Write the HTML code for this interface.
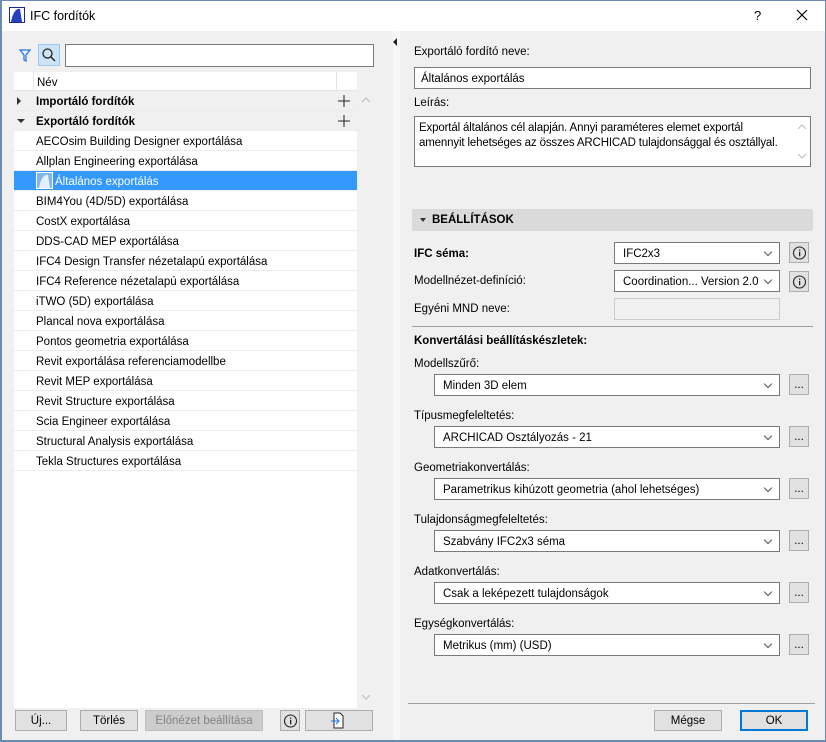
<!DOCTYPE html>
<html><head><meta charset="utf-8"><style>
*{box-sizing:border-box;margin:0;padding:0}
body{width:826px;height:742px;overflow:hidden;background:#f0f0f0;font-family:"Liberation Sans",sans-serif;font-size:11.5px;color:#000;position:relative}
.a{position:absolute}
.win{left:0;top:0;width:826px;height:742px;border:1px solid #6b8cae;border-left:2px solid #6b8cae;border-bottom:2px solid #6b8cae}
.row{position:absolute;left:14px;width:343px;height:20px;line-height:22px;padding-left:22px;border-bottom:1px solid #ececec;background:#fff;white-space:nowrap}
.grp{background:#f0f0f0;font-weight:bold}
.inp{position:absolute;background:#fff;border:1px solid #7a7a7a;height:22px;line-height:22px;padding-left:6px;white-space:nowrap}
.dd{position:absolute;background:#fff;border:1px solid #7a7a7a;height:22px;line-height:22px;padding-left:8px;white-space:nowrap}
.dd:after{content:"";position:absolute;right:8px;top:6px;width:5px;height:5px;border-right:1px solid #555;border-bottom:1px solid #555;transform:rotate(45deg)}
.btn{position:absolute;background:#e1e1e1;border:1px solid #adadad;height:21px;line-height:21px;text-align:center}
.info{position:absolute;width:20px;height:21px;background:#e1e1e1;border:1px solid #adadad}
.lbl{position:absolute;white-space:nowrap;margin-top:2px}
</style></head><body>
<svg width="0" height="0" style="position:absolute"><defs><symbol id="i" viewBox="0 0 20 21"><circle cx="9.5" cy="10" r="6" fill="none" stroke="#222" stroke-width="1.1"/><rect x="9" y="6.5" width="1.3" height="1.3" fill="#222"/><rect x="9" y="8.8" width="1.3" height="4.5" fill="#222"/></symbol></defs></svg>
<div class="a" style="left:0;top:0;width:826px;height:31px;background:#fff"></div>
<svg class="a" style="left:9px;top:7px" width="16" height="16"><rect x="0.5" y="0.5" width="15" height="15" fill="#fff" stroke="#1a2a8a"/><path d="M2 15 C4 4 8 1 11 2 L13 15Z" fill="#2a3fc0"/></svg>
<div class="lbl" style="left:30px;top:7px;font-size:12.5px">IFC fordítók</div>
<div class="lbl" style="left:754px;top:6px;font-size:13px">?</div>
<svg class="a" style="left:796px;top:9px" width="12" height="12"><path d="M1 1L11 11M11 1L1 11" stroke="#000" stroke-width="1.2"/></svg>

<svg class="a" style="left:19px;top:49px" width="12" height="13"><path d="M1 1H11L7 6V12L5 11V6Z" fill="none" stroke="#1a73e8" stroke-width="1.2"/></svg>
<div class="a" style="left:38px;top:44px;width:22px;height:22px;background:#cce4f7;border:1px solid #99c9ef"></div>
<svg class="a" style="left:41px;top:47px" width="16" height="16"><circle cx="6.5" cy="6.5" r="4.5" fill="none" stroke="#222" stroke-width="1.3"/><path d="M10 10L14 14" stroke="#222" stroke-width="1.5"/></svg>
<div class="a" style="left:65px;top:44px;width:309px;height:23px;background:#fff;border:1px solid #7a7a7a"></div>
<div class="a" style="left:14px;top:72px;width:343px;height:19px;background:#fff;border-bottom:1px solid #e5e5e5"></div>
<div class="a" style="left:33px;top:72px;width:1px;height:19px;background:#e5e5e5"></div>
<div class="a" style="left:336px;top:72px;width:1px;height:19px;background:#e5e5e5"></div>
<div class="lbl" style="left:37px;top:75px">Név</div>
<div class="a" style="left:14px;top:91px;width:343px;height:617px;background:#fff"></div>
<div class="row grp" style="top:91px">Importáló fordítók</div>
<div class="row grp" style="top:111px">Exportáló fordítók</div>
<div class="a" style="left:17px;top:97px;width:0;height:0;border-left:4px solid #333;border-top:4px solid transparent;border-bottom:4px solid transparent"></div>
<div class="a" style="left:17px;top:119px;width:0;height:0;border-top:4px solid #333;border-left:4px solid transparent;border-right:4px solid transparent"></div>
<svg class="a" style="left:338px;top:95px" width="12" height="12"><path d="M6 0V12M0 6H12" stroke="#222"/></svg>
<svg class="a" style="left:338px;top:115px" width="12" height="12"><path d="M6 0V12M0 6H12" stroke="#222"/></svg>
<div class="row" style="top:131px">AECOsim Building Designer exportálása</div>
<div class="row" style="top:151px">Allplan Engineering exportálása</div>
<div class="row" style="top:171px;background:#3399ff;color:#fff;padding-left:41px">Általános exportálás</div>
<svg class="a" style="left:36px;top:172px" width="17" height="17"><rect x="0.5" y="0.5" width="16" height="16" fill="#7fb6ee" stroke="#fff"/><path d="M3 16 C5 5 9 2 12 3 L14 16Z" fill="#fff" opacity=".8"/></svg>
<div class="row" style="top:191px">BIM4You (4D/5D) exportálása</div>
<div class="row" style="top:211px">CostX exportálása</div>
<div class="row" style="top:231px">DDS-CAD MEP exportálása</div>
<div class="row" style="top:251px">IFC4 Design Transfer nézetalapú exportálása</div>
<div class="row" style="top:271px">IFC4 Reference nézetalapú exportálása</div>
<div class="row" style="top:291px">iTWO (5D) exportálása</div>
<div class="row" style="top:311px">Plancal nova exportálása</div>
<div class="row" style="top:331px">Pontos geometria exportálása</div>
<div class="row" style="top:351px">Revit exportálása referenciamodellbe</div>
<div class="row" style="top:371px">Revit MEP exportálása</div>
<div class="row" style="top:391px">Revit Structure exportálása</div>
<div class="row" style="top:411px">Scia Engineer exportálása</div>
<div class="row" style="top:431px">Structural Analysis exportálása</div>
<div class="row" style="top:451px">Tekla Structures exportálása</div>
<svg class="a" style="left:361px;top:97px" width="10" height="6"><path d="M1 5L5 1L9 5" stroke="#bbb" fill="none"/></svg>
<svg class="a" style="left:361px;top:694px" width="10" height="6"><path d="M1 1L5 5L9 1" stroke="#bbb" fill="none"/></svg>
<div class="btn" style="left:15px;top:710px;width:52px">Új...</div>
<div class="btn" style="left:80px;top:710px;width:58px">Törlés</div>
<div class="btn" style="left:145px;top:710px;width:118px;background:#ccc;border-color:#bfbfbf;color:#838383">Előnézet beállítása</div>
<div class="info" style="left:280px;top:710px"><svg width="20" height="21"><use href="#i"/></svg></div>
<div class="btn" style="left:305px;top:710px;width:68px"></div>
<svg class="a" style="left:330px;top:712px" width="16" height="17"><path d="M4 1H10L13 4V16H4Z" fill="#fff" stroke="#222"/><path d="M1 9H9M6 6L9 9L6 12" stroke="#1a73e8" fill="none"/></svg>

<div class="a" style="left:393px;top:31px;width:7px;height:709px;background:#f7f7f7"></div>
<div class="a" style="left:393px;top:38px;width:0;height:0;border-right:4px solid #222;border-top:4px solid transparent;border-bottom:4px solid transparent"></div>

<div class="lbl" style="left:414px;top:44px">Exportáló fordító neve:</div>
<div class="inp" style="left:414px;top:67px;width:397px">Általános exportálás</div>
<div class="lbl" style="left:414px;top:95px">Leírás:</div>
<div class="a" style="left:414px;top:116px;width:397px;height:51px;background:#fff;border:1px solid #7a7a7a;padding:4px 4px 3px 4px;line-height:15px;white-space:nowrap;overflow:hidden;letter-spacing:-0.15px">Exportál általános cél alapján. Annyi paraméteres elemet exportál<br>amennyit lehetséges az összes ARCHICAD tulajdonsággal és osztállyal.</div>
<svg class="a" style="left:797px;top:124px" width="10" height="6"><path d="M1 5L5 1L9 5" stroke="#bbb" fill="none"/></svg>
<svg class="a" style="left:797px;top:153px" width="10" height="6"><path d="M1 1L5 5L9 1" stroke="#bbb" fill="none"/></svg>
<div class="a" style="left:412px;top:209px;width:401px;height:22px;background:#dadada;border-radius:2px"></div>
<div class="a" style="left:420px;top:218px;width:0;height:0;border-top:4px solid #333;border-left:3.5px solid transparent;border-right:3.5px solid transparent"></div>
<div class="lbl" style="left:432px;top:212px;font-weight:bold">BEÁLLÍTÁSOK</div>
<div class="lbl" style="left:414px;top:246px;font-weight:bold">IFC séma:</div>
<div class="dd" style="left:614px;top:242px;width:166px">IFC2x3</div>
<div class="info" style="left:789px;top:242px"><svg width="20" height="21"><use href="#i"/></svg></div>
<div class="lbl" style="left:414px;top:273px">Modellnézet-definíció:</div>
<div class="dd" style="left:614px;top:270px;width:166px">Coordination... Version 2.0</div>
<div class="info" style="left:789px;top:271px"><svg width="20" height="21"><use href="#i"/></svg></div>
<div class="lbl" style="left:414px;top:301px">Egyéni MND neve:</div>
<div class="a" style="left:614px;top:298px;width:166px;height:22px;background:#f0f0f0;border:1px solid #ccc"></div>
<div class="a" style="left:412px;top:326px;width:401px;height:1px;background:#a0a0a0"></div>
<div class="lbl" style="left:414px;top:333px;font-weight:bold">Konvertálási beállításkészletek:</div>
<div class="lbl" style="left:414px;top:356px">Modellszűrő:</div>
<div class="dd" style="left:434px;top:374px;width:346px">Minden 3D elem</div>
<div class="btn" style="left:789px;top:374px;width:20px">...</div>
<div class="lbl" style="left:414px;top:408px">Típusmegfeleltetés:</div>
<div class="dd" style="left:434px;top:426px;width:346px">ARCHICAD Osztályozás - 21</div>
<div class="btn" style="left:789px;top:426px;width:20px">...</div>
<div class="lbl" style="left:414px;top:460px">Geometriakonvertálás:</div>
<div class="dd" style="left:434px;top:478px;width:346px">Parametrikus kihúzott geometria (ahol lehetséges)</div>
<div class="btn" style="left:789px;top:478px;width:20px">...</div>
<div class="lbl" style="left:414px;top:512px">Tulajdonságmegfeleltetés:</div>
<div class="dd" style="left:434px;top:530px;width:346px">Szabvány IFC2x3 séma</div>
<div class="btn" style="left:789px;top:530px;width:20px">...</div>
<div class="lbl" style="left:414px;top:564px">Adatkonvertálás:</div>
<div class="dd" style="left:434px;top:582px;width:346px">Csak a leképezett tulajdonságok</div>
<div class="btn" style="left:789px;top:582px;width:20px">...</div>
<div class="lbl" style="left:414px;top:616px">Egységkonvertálás:</div>
<div class="dd" style="left:434px;top:634px;width:346px">Metrikus (mm) (USD)</div>
<div class="btn" style="left:789px;top:634px;width:20px">...</div>
<div class="a" style="left:408px;top:703px;width:407px;height:1px;background:#a0a0a0"></div>
<div class="btn" style="left:654px;top:710px;width:68px">Mégse</div>
<div class="btn" style="left:740px;top:710px;width:68px;border:2px solid #0078d7;line-height:19px">OK</div>
<div class="a win"></div>
</body></html>
